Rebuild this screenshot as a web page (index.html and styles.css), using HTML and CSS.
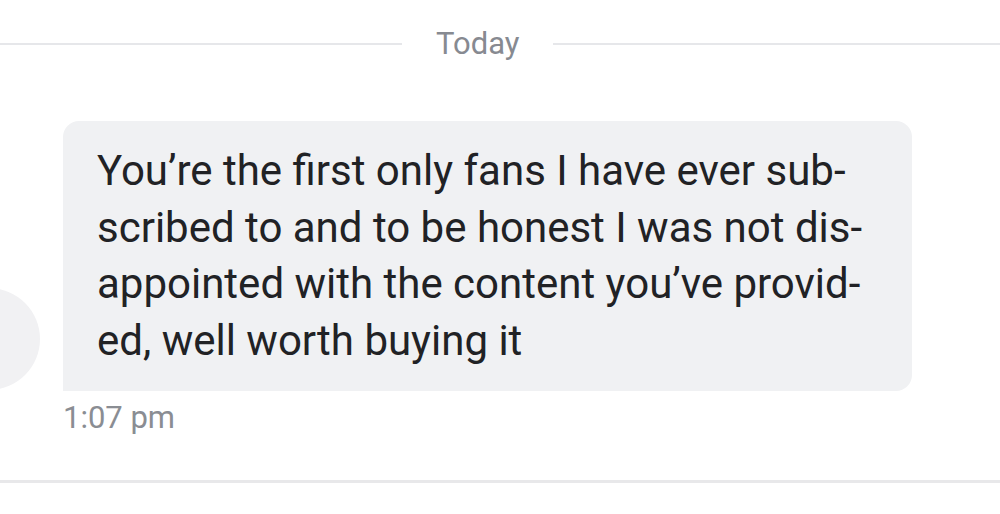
FILE: index.html
```html
<!DOCTYPE html>
<html lang="en">
<head>
    <meta charset="UTF-8">
    <meta name="viewport" content="width=device-width, initial-scale=1.0">
    <link rel="stylesheet" href="styles.css">
</head>
<body>

<div class="chat">
    <div class="day-divider">
        <span class="day-line day-line-left"></span>
        <span class="day-label">Today</span>
        <span class="day-line"></span>
    </div>

    <div class="message">
        <div class="avatar"></div>
        <div class="message-body">
            <div class="bubble">You’re the first only fans I have ever sub-<br>scribed to and to be honest I was not dis-<br>appointed with the content you’ve provid-<br>ed, well worth buying it</div>
            <div class="time">1:07 pm</div>
        </div>
    </div>

    <div class="bottom-rule"></div>
</div>

</body>
</html>
```

FILE: styles.css
```css
body {
    margin: 0;
    padding: 0;
    background: #ffffff;
    font-family: 'Roboto', 'Noto Sans', sans-serif;
    color: #222326;
    overflow: hidden;
}

.chat {
    width: 1000px;
    height: 514px;
    position: relative;
    overflow: hidden;
}

.day-divider {
    display: flex;
    align-items: center;
    height: 30px;
    padding-top: 29px;
}

.day-line {
    flex: 1;
    height: 2px;
    background: #e6e7ea;
}

.day-line-left {
    flex: 0 0 402px;
}

.day-label {
    font-size: 31px;
    color: #878a91;
    padding: 0 34px;
    line-height: 30px;
}

.message {
    display: flex;
    margin-top: 62px;
}

.avatar {
    position: absolute;
    left: -62px;
    top: 288px;
    width: 102px;
    height: 102px;
    border-radius: 50%;
    background: #f1f1f3;
}

.message-body {
    margin-left: 63px;
}

.bubble {
    width: 781px;
    padding: 22px 34px 22px 34px;
    background: #f0f1f3;
    border-radius: 16px 16px 16px 0;
    font-size: 42px;
    line-height: 56.5px;
    color: #212225;
    white-space: nowrap;
}

.time {
    margin-top: 10px;
    font-size: 31px;
    color: #8a8d93;
    line-height: 34px;
}

.bottom-rule {
    position: absolute;
    left: 0;
    right: 0;
    top: 480px;
    height: 3px;
    background: #e8e8ea;
}
```
